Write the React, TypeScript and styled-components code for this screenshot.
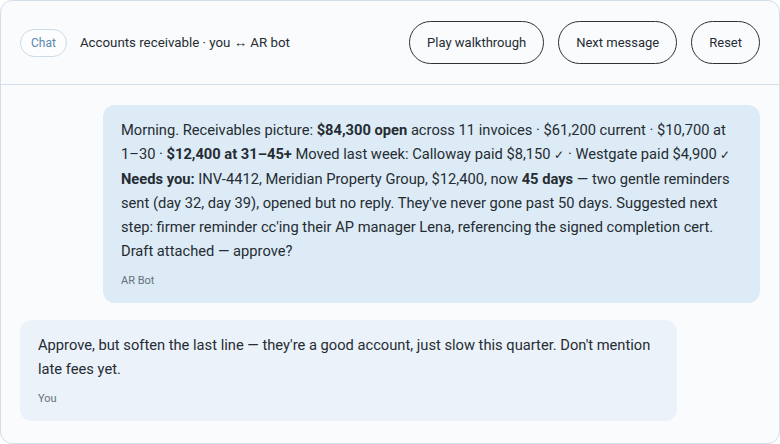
import React from 'react';
import styled, { createGlobalStyle } from 'styled-components';

const GlobalStyle = createGlobalStyle`
    html, body {
        margin: 0;
        padding: 0;
        background: #ffffff;
    }
    body {
        font-family: Roboto, "Noto Sans", sans-serif;
        color: #262c33;
    }
    * {
        box-sizing: border-box;
    }
`;

const Card = styled.div`
    width: 780px;
    height: 444px;
    background: #f9fbfd;
    border: 1px solid #d3dee8;
    border-radius: 12px;
    overflow: hidden;
    display: flex;
    flex-direction: column;
`;

const Header = styled.header`
    display: flex;
    align-items: center;
    justify-content: space-between;
    padding: 20px 19px 20px 19px;
    border-bottom: 1px solid #d3dee8;
`;

const TitleGroup = styled.div`
    display: flex;
    align-items: center;
    gap: 13px;
`;

const Tag = styled.span`
    display: inline-flex;
    align-items: center;
    height: 28px;
    padding: 0 10px;
    border: 1px solid #cbdbe8;
    border-radius: 14px;
    background: #fbfdff;
    color: #5a87ad;
    font-size: 12px;
`;

const Title = styled.span`
    font-size: 13.3px;
    color: #252b31;
`;

const Actions = styled.div`
    display: flex;
    gap: 14px;
`;

const PillButton = styled.button`
    height: 43px;
    padding: 0 17px;
    border: 1px solid #2c3238;
    border-radius: 22px;
    background: transparent;
    color: #262c33;
    font-family: inherit;
    font-size: 13px;
    cursor: pointer;
`;

const Thread = styled.div`
    flex: 1;
    display: flex;
    flex-direction: column;
    gap: 17px;
    padding: 20px 19px;
`;

const Bubble = styled.div<{ $mine?: boolean }>`
    width: 657px;
    align-self: ${(p) => (p.$mine ? 'flex-start' : 'flex-end')};
    background: ${(p) => (p.$mine ? '#ebf2f9' : '#dcebf5')};
    border-radius: 12px;
    padding: 13px 18px 14px;
`;

const Body = styled.p`
    margin: 0;
    font-size: 14.7px;
    line-height: 24px;
    color: #262c33;

    b {
        font-weight: 700;
    }
`;

const Check = styled.span`
    font-size: 12px;
`;

const Sender = styled.div`
    margin-top: 10px;
    font-size: 11px;
    line-height: 16px;
    color: #66717c;
`;

export default function App() {
    return (
        <>
            <GlobalStyle />
            <Card>
                <Header>
                    <TitleGroup>
                        <Tag>Chat</Tag>
                        <Title>Accounts receivable · you ↔ AR bot</Title>
                    </TitleGroup>
                    <Actions>
                        <PillButton>Play walkthrough</PillButton>
                        <PillButton>Next message</PillButton>
                        <PillButton>Reset</PillButton>
                    </Actions>
                </Header>
                <Thread>
                    <Bubble>
                        <Body>
                            Morning. Receivables picture: <b>$84,300 open</b> across 11 invoices · $61,200 current · $10,700 at
                            1–30 · <b>$12,400 at 31–45+</b> Moved last week: Calloway paid $8,150 <Check>✓</Check> · Westgate
                            paid $4,900 <Check>✓</Check> <b>Needs you:</b> INV-4412, Meridian Property Group, $12,400, now{' '}
                            <b>45 days</b> — two gentle reminders sent (day 32, day 39), opened but no reply. They've never
                            gone past 50 days. Suggested next step: firmer reminder cc'ing their AP manager Lena, referencing
                            the signed completion cert. Draft attached — approve?
                        </Body>
                        <Sender>AR Bot</Sender>
                    </Bubble>
                    <Bubble $mine>
                        <Body>
                            Approve, but soften the last line — they're a good account, just slow this quarter. Don't mention
                            late fees yet.
                        </Body>
                        <Sender>You</Sender>
                    </Bubble>
                </Thread>
            </Card>
        </>
    );
}
